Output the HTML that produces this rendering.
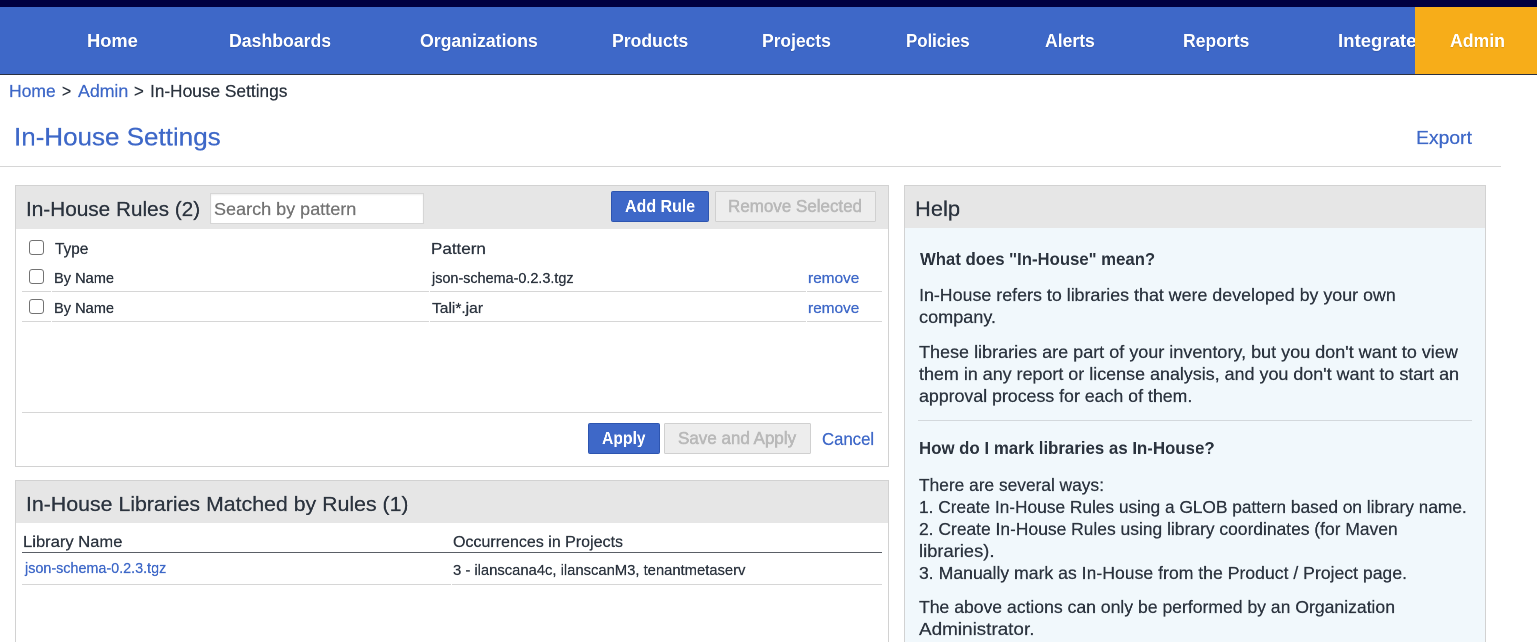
<!DOCTYPE html>
<html><head><meta charset="utf-8"><style>
html,body{margin:0;padding:0;width:1537px;height:642px;overflow:hidden;background:#fff;position:relative}
body{font-family:"Liberation Sans",sans-serif}
.b{position:absolute;box-sizing:border-box}
.t{z-index:2;position:absolute;white-space:nowrap;transform-origin:0 0;line-height:0;height:0;will-change:transform}
.nav{text-shadow:0 2px 2px rgba(0,0,0,.15)}
</style></head><body>
<div class="b" style="left:0;top:0;width:1537px;height:7px;background:#000040"></div>
<div class="b" style="left:0;top:7px;width:1537px;height:67px;background:#3e68c8"></div>
<div class="b" style="left:0;top:74px;width:1537px;height:1px;background:#2a3040"></div>
<div class="b" style="left:1415px;top:7px;width:122px;height:67px;background:#f7ad19;z-index:1"></div>
<div class="b" style="left:0;top:166px;width:1501px;height:1px;background:#d6d6d6"></div>
<!-- panel 1 -->
<div class="b" style="left:15px;top:185px;width:874px;height:282px;border:1px solid #d2d2d2;background:#fff"></div>
<div class="b" style="left:16px;top:186px;width:872px;height:43px;background:#e6e6e6"></div>
<div class="b" style="left:210px;top:193px;width:214px;height:31px;background:#fff;border:1px solid #d6d6d6;box-shadow:inset 0 1px 2px rgba(0,0,0,.07)"></div>
<div class="b" style="left:611px;top:191px;width:98px;height:31px;background:#3e68c8;border:1px solid #2d55b0;border-radius:1.5px"></div>
<div class="b" style="left:715px;top:191px;width:161px;height:31px;background:#ededed;border:1px solid #d0d0d0;border-radius:1px"></div>
<div class="b" style="left:29px;top:240px;width:15px;height:15px;border:1.5px solid #737373;border-radius:3px;background:#fff"></div>
<div class="b" style="left:29px;top:269px;width:15px;height:15px;border:1.5px solid #737373;border-radius:3px;background:#fff"></div>
<div class="b" style="left:29px;top:299px;width:15px;height:15px;border:1.5px solid #737373;border-radius:3px;background:#fff"></div>
<div class="b" style="left:22px;top:291px;width:29px;height:1px;background:#d6d6d6"></div>
<div class="b" style="left:52px;top:291px;width:377px;height:1px;background:#d6d6d6"></div>
<div class="b" style="left:430px;top:291px;width:376px;height:1px;background:#d6d6d6"></div>
<div class="b" style="left:807px;top:291px;width:75px;height:1px;background:#d6d6d6"></div>
<div class="b" style="left:22px;top:321px;width:29px;height:1px;background:#d6d6d6"></div>
<div class="b" style="left:52px;top:321px;width:377px;height:1px;background:#d6d6d6"></div>
<div class="b" style="left:430px;top:321px;width:376px;height:1px;background:#d6d6d6"></div>
<div class="b" style="left:807px;top:321px;width:75px;height:1px;background:#d6d6d6"></div>
<div class="b" style="left:22px;top:412px;width:860px;height:1px;background:#d6d6d6"></div>
<div class="b" style="left:588px;top:423px;width:72px;height:31px;background:#3e68c8;border:1px solid #2d55b0;border-radius:1.5px"></div>
<div class="b" style="left:664px;top:423px;width:147px;height:31px;background:#ededed;border:1px solid #d0d0d0;border-radius:1px"></div>
<!-- panel 2 -->
<div class="b" style="left:15px;top:480px;width:874px;height:200px;border:1px solid #d2d2d2;background:#fff"></div>
<div class="b" style="left:16px;top:481px;width:872px;height:42px;background:#e6e6e6"></div>
<div class="b" style="left:22px;top:552px;width:860px;height:1px;background:#5a5f66"></div>
<div class="b" style="left:22px;top:584px;width:429px;height:1px;background:#d6d6d6"></div>
<div class="b" style="left:452px;top:584px;width:430px;height:1px;background:#d6d6d6"></div>
<!-- help -->
<div class="b" style="left:904px;top:185px;width:582px;height:500px;border:1px solid #d2d2d2;background:#f1f8fc"></div>
<div class="b" style="left:905px;top:186px;width:580px;height:42px;background:#e6e6e6"></div>
<div class="b" style="left:918px;top:420px;width:554px;height:1px;background:#d3d8dc"></div>

<div class="t nav" style="left:86.71px;top:41.00px;font-size:37.00px;font-weight:700;color:#ffffff;transform:scale(0.4939,0.5000)">Home</div>
<div class="t nav" style="left:228.94px;top:41.00px;font-size:37.00px;font-weight:700;color:#ffffff;transform:scale(0.4776,0.5000)">Dashboards</div>
<div class="t nav" style="left:420.12px;top:41.00px;font-size:37.00px;font-weight:700;color:#ffffff;transform:scale(0.4777,0.5000)">Organizations</div>
<div class="t nav" style="left:612.05px;top:41.00px;font-size:37.00px;font-weight:700;color:#ffffff;transform:scale(0.4753,0.5000)">Products</div>
<div class="t nav" style="left:762.46px;top:41.00px;font-size:37.00px;font-weight:700;color:#ffffff;transform:scale(0.4713,0.5000)">Projects</div>
<div class="t nav" style="left:905.69px;top:41.00px;font-size:37.00px;font-weight:700;color:#ffffff;transform:scale(0.4546,0.5000)">Policies</div>
<div class="t nav" style="left:1044.50px;top:41.00px;font-size:37.00px;font-weight:700;color:#ffffff;transform:scale(0.4746,0.5000)">Alerts</div>
<div class="t nav" style="left:1182.95px;top:41.00px;font-size:37.00px;font-weight:700;color:#ffffff;transform:scale(0.4744,0.5000)">Reports</div>
<div class="t nav" style="z-index:0;left:1338.40px;top:41.00px;font-size:37.00px;font-weight:700;color:#ffffff;transform:scale(0.5017,0.5000)">Integrate</div>
<div class="t nav" style="left:1450.00px;top:41.00px;font-size:37.00px;font-weight:700;color:#ffffff;transform:scale(0.4775,0.5000)">Admin</div>
<div class="t" style="left:8.60px;top:91.00px;font-size:34.80px;font-weight:400;color:#3e68c8;transform:scale(0.5019,0.5000);-webkit-text-stroke:0.50px #3e68c8">Home</div>
<div class="t" style="left:61.65px;top:91.00px;font-size:34.80px;font-weight:400;color:#2b333e;transform:scale(0.4500,0.5000);-webkit-text-stroke:0.50px #2b333e">&gt;</div>
<div class="t" style="left:77.70px;top:91.00px;font-size:34.80px;font-weight:400;color:#3e68c8;transform:scale(0.5099,0.5000);-webkit-text-stroke:0.50px #3e68c8">Admin</div>
<div class="t" style="left:134.21px;top:91.00px;font-size:34.80px;font-weight:400;color:#2b333e;transform:scale(0.4889,0.5000);-webkit-text-stroke:0.50px #2b333e">&gt;</div>
<div class="t" style="left:149.81px;top:91.00px;font-size:34.80px;font-weight:400;color:#2b333e;transform:scale(0.4967,0.5000);-webkit-text-stroke:0.50px #2b333e">In-House Settings</div>
<div class="t" style="left:13.52px;top:137.00px;font-size:50.00px;font-weight:400;color:#3e68c8;transform:scale(0.5198,0.5000);-webkit-text-stroke:0.50px #3e68c8">In-House Settings</div>
<div class="t" style="left:1415.93px;top:138.00px;font-size:37.00px;font-weight:400;color:#3e68c8;transform:scale(0.5227,0.5000);-webkit-text-stroke:0.50px #3e68c8">Export</div>
<div class="t" style="left:26.17px;top:209.00px;font-size:40.60px;font-weight:400;color:#2b333e;transform:scale(0.5113,0.5000);-webkit-text-stroke:0.50px #2b333e">In-House Rules (2)</div>
<div class="t" style="left:214.38px;top:209.00px;font-size:34.80px;font-weight:400;color:#737373;transform:scale(0.5181,0.5000);-webkit-text-stroke:0.50px #737373">Search by pattern</div>
<div class="t" style="left:625.00px;top:206.00px;font-size:34.80px;font-weight:700;color:#ffffff;transform:scale(0.4594,0.5000)">Add Rule</div>
<div class="t" style="left:728.22px;top:206.00px;font-size:34.80px;font-weight:400;color:#b9b9b9;transform:scale(0.4880,0.5000);-webkit-text-stroke:1.20px #b9b9b9">Remove Selected</div>
<div class="t" style="left:54.70px;top:249.00px;font-size:31.00px;font-weight:400;color:#2b333e;transform:scale(0.4957,0.5000);-webkit-text-stroke:0.50px #2b333e">Type</div>
<div class="t" style="left:430.70px;top:249.00px;font-size:31.00px;font-weight:400;color:#2b333e;transform:scale(0.5480,0.5000);-webkit-text-stroke:0.50px #2b333e">Pattern</div>
<div class="t" style="left:53.69px;top:278.00px;font-size:29.00px;font-weight:400;color:#2b333e;transform:scale(0.5029,0.5000);-webkit-text-stroke:0.50px #2b333e">By Name</div>
<div class="t" style="left:431.50px;top:278.00px;font-size:29.00px;font-weight:400;color:#2b333e;transform:scale(0.4962,0.5000);-webkit-text-stroke:0.50px #2b333e">json-schema-0.2.3.tgz</div>
<div class="t" style="left:808.27px;top:278.00px;font-size:29.00px;font-weight:400;color:#3e68c8;transform:scale(0.5308,0.5000);-webkit-text-stroke:0.50px #3e68c8">remove</div>
<div class="t" style="left:53.69px;top:308.00px;font-size:29.00px;font-weight:400;color:#2b333e;transform:scale(0.5029,0.5000);-webkit-text-stroke:0.50px #2b333e">By Name</div>
<div class="t" style="left:431.80px;top:308.00px;font-size:29.00px;font-weight:400;color:#2b333e;transform:scale(0.5355,0.5000);-webkit-text-stroke:0.50px #2b333e">Tali*.jar</div>
<div class="t" style="left:808.27px;top:308.00px;font-size:29.00px;font-weight:400;color:#3e68c8;transform:scale(0.5308,0.5000);-webkit-text-stroke:0.50px #3e68c8">remove</div>
<div class="t" style="left:602.00px;top:438.00px;font-size:34.80px;font-weight:700;color:#ffffff;transform:scale(0.4501,0.5000)">Apply</div>
<div class="t" style="left:677.91px;top:438.00px;font-size:34.80px;font-weight:400;color:#b9b9b9;transform:scale(0.4882,0.5000);-webkit-text-stroke:1.20px #b9b9b9">Save and Apply</div>
<div class="t" style="left:821.72px;top:439.00px;font-size:34.80px;font-weight:400;color:#3e68c8;transform:scale(0.4811,0.5000);-webkit-text-stroke:0.50px #3e68c8">Cancel</div>
<div class="t" style="left:25.92px;top:504.00px;font-size:40.60px;font-weight:400;color:#2b333e;transform:scale(0.5251,0.5000);-webkit-text-stroke:0.50px #2b333e">In-House Libraries Matched by Rules (1)</div>
<div class="t" style="left:23.23px;top:542.00px;font-size:31.00px;font-weight:400;color:#2b333e;transform:scale(0.5344,0.5000);-webkit-text-stroke:0.50px #2b333e">Library Name</div>
<div class="t" style="left:453.38px;top:542.00px;font-size:31.00px;font-weight:400;color:#2b333e;transform:scale(0.5166,0.5000);-webkit-text-stroke:0.50px #2b333e">Occurrences in Projects</div>
<div class="t" style="left:24.70px;top:568.00px;font-size:29.00px;font-weight:400;color:#3e68c8;transform:scale(0.4951,0.5000);-webkit-text-stroke:0.50px #3e68c8">json-schema-0.2.3.tgz</div>
<div class="t" style="left:453.39px;top:570.00px;font-size:29.00px;font-weight:400;color:#2b333e;transform:scale(0.5096,0.5000);-webkit-text-stroke:0.50px #2b333e">3 - ilanscana4c, ilanscanM3, tenantmetaserv</div>
<div class="t" style="left:915.23px;top:209.00px;font-size:42.00px;font-weight:400;color:#2b333e;transform:scale(0.5218,0.5000);-webkit-text-stroke:0.50px #2b333e">Help</div>
<div class="t" style="left:919.50px;top:259.00px;font-size:34.80px;font-weight:700;color:#2b333e;transform:scale(0.4805,0.5000)">What does &quot;In-House&quot; mean?</div>
<div class="t" style="left:919.00px;top:295.00px;font-size:34.80px;font-weight:400;color:#2b333e;transform:scale(0.5124,0.5000);-webkit-text-stroke:0.50px #2b333e">In-House refers to libraries that were developed by your own</div>
<div class="t" style="left:919.00px;top:317.00px;font-size:34.80px;font-weight:400;color:#2b333e;transform:scale(0.5199,0.5000);-webkit-text-stroke:0.50px #2b333e">company.</div>
<div class="t" style="left:919.00px;top:352.00px;font-size:34.80px;font-weight:400;color:#2b333e;transform:scale(0.5177,0.5000);-webkit-text-stroke:0.50px #2b333e">These libraries are part of your inventory, but you don&#x27;t want to view</div>
<div class="t" style="left:919.00px;top:374.00px;font-size:34.80px;font-weight:400;color:#2b333e;transform:scale(0.5147,0.5000);-webkit-text-stroke:0.50px #2b333e">them in any report or license analysis, and you don&#x27;t want to start an</div>
<div class="t" style="left:919.00px;top:396.00px;font-size:34.80px;font-weight:400;color:#2b333e;transform:scale(0.5102,0.5000);-webkit-text-stroke:0.50px #2b333e">approval process for each of them.</div>
<div class="t" style="left:919.00px;top:448.00px;font-size:34.80px;font-weight:700;color:#2b333e;transform:scale(0.4838,0.5000)">How do I mark libraries as In-House?</div>
<div class="t" style="left:919.00px;top:485.00px;font-size:34.80px;font-weight:400;color:#2b333e;transform:scale(0.4980,0.5000);-webkit-text-stroke:0.50px #2b333e">There are several ways:</div>
<div class="t" style="left:919.00px;top:507.00px;font-size:34.80px;font-weight:400;color:#2b333e;transform:scale(0.4968,0.5000);-webkit-text-stroke:0.50px #2b333e">1. Create In-House Rules using a GLOB pattern based on library name.</div>
<div class="t" style="left:919.00px;top:529.00px;font-size:34.80px;font-weight:400;color:#2b333e;transform:scale(0.5010,0.5000);-webkit-text-stroke:0.50px #2b333e">2. Create In-House Rules using library coordinates (for Maven</div>
<div class="t" style="left:919.00px;top:551.00px;font-size:34.80px;font-weight:400;color:#2b333e;transform:scale(0.5270,0.5000);-webkit-text-stroke:0.50px #2b333e">libraries).</div>
<div class="t" style="left:919.00px;top:573.00px;font-size:34.80px;font-weight:400;color:#2b333e;transform:scale(0.5067,0.5000);-webkit-text-stroke:0.50px #2b333e">3. Manually mark as In-House from the Product / Project page.</div>
<div class="t" style="left:919.00px;top:607.00px;font-size:34.80px;font-weight:400;color:#2b333e;transform:scale(0.5053,0.5000);-webkit-text-stroke:0.50px #2b333e">The above actions can only be performed by an Organization</div>
<div class="t" style="left:919.00px;top:629.00px;font-size:34.80px;font-weight:400;color:#2b333e;transform:scale(0.5427,0.5000);-webkit-text-stroke:0.50px #2b333e">Administrator.</div>
</body></html>
